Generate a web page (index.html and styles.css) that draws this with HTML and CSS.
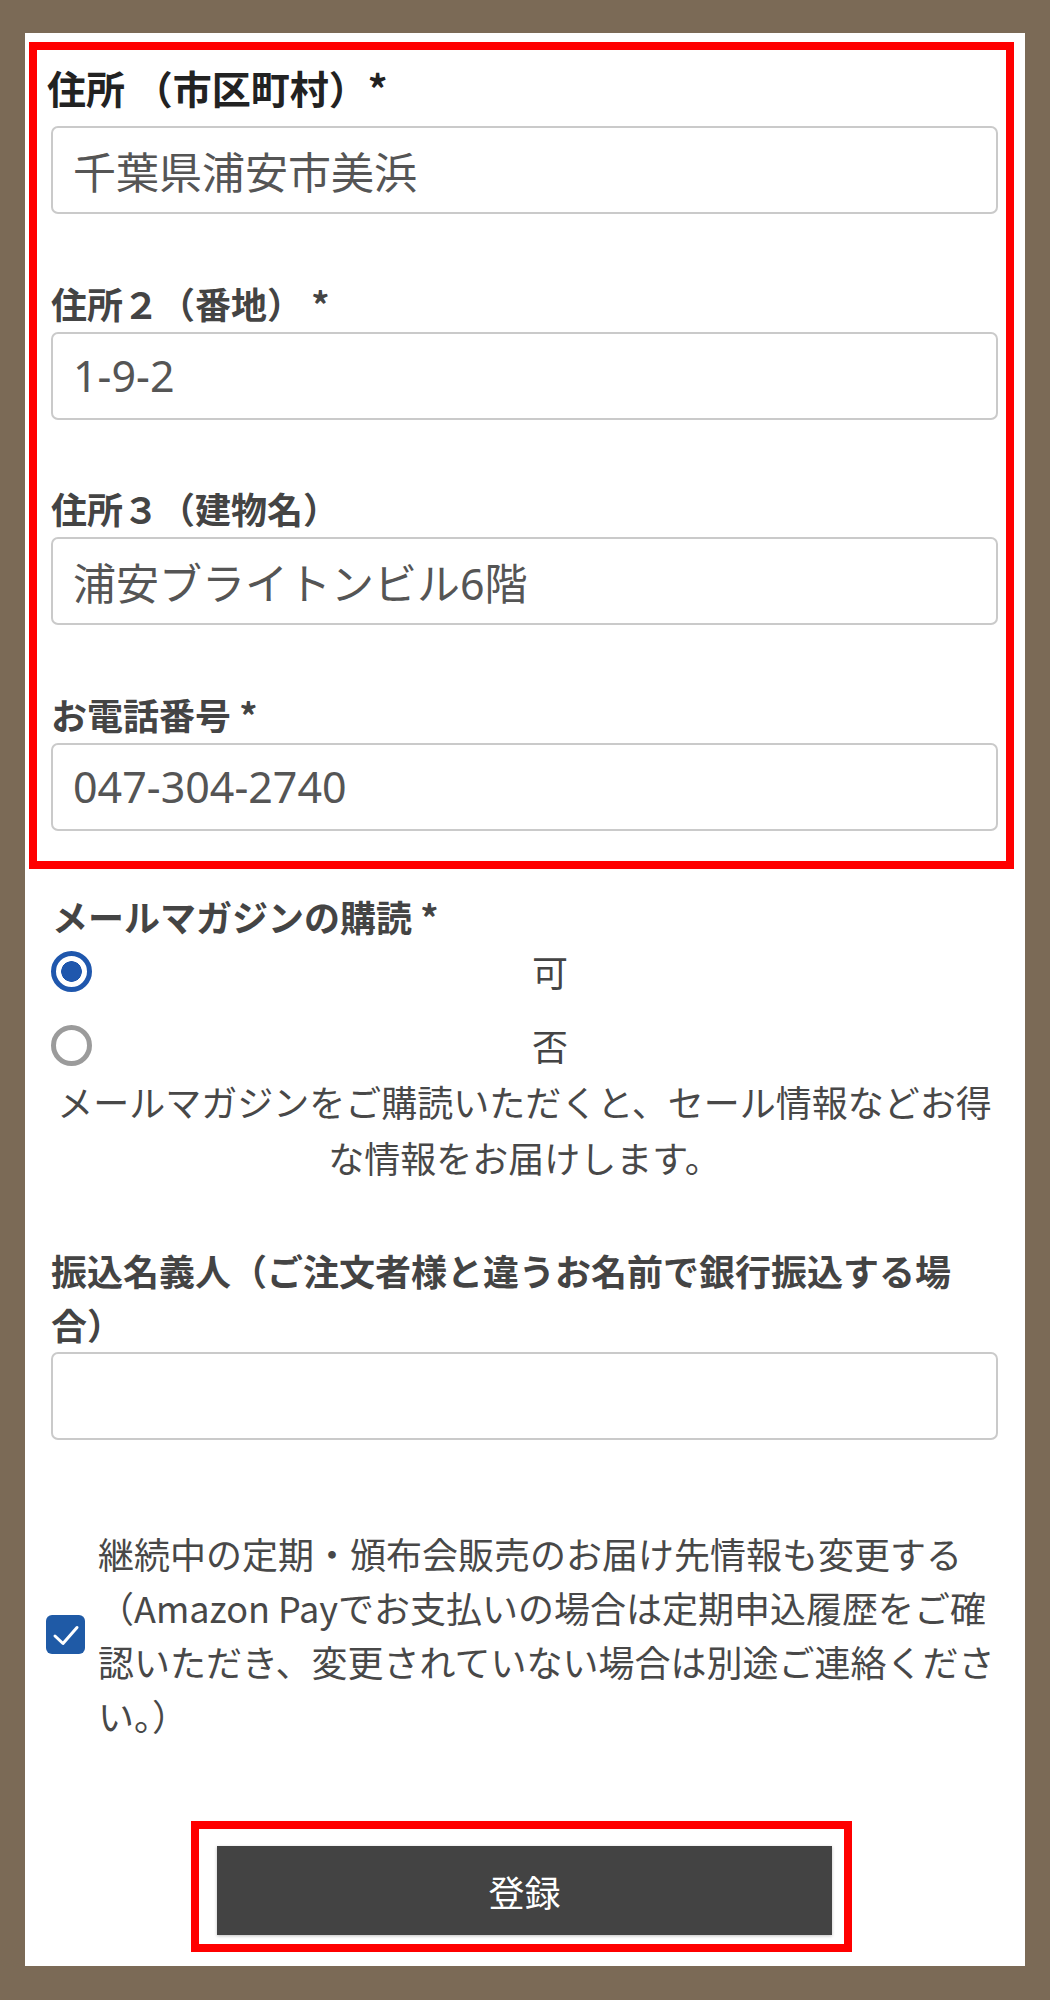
FILE: index.html
```html
<!DOCTYPE html>
<html lang="ja">
<head>
<meta charset="utf-8">
<title>お届け先情報</title>
<link rel="stylesheet" href="styles.css">
</head>
<body>
<div class="panel">
  <div class="mark mark-fields">
    <div class="field">
      <label class="label label-first">住所 （市区町村）*</label>
      <input class="text-input" type="text" value="千葉県浦安市美浜">
    </div>
    <div class="field">
      <label class="label">住所２（番地） *</label>
      <input class="text-input" type="text" value="1-9-2">
    </div>
    <div class="field">
      <label class="label">住所３（建物名）</label>
      <input class="text-input" type="text" value="浦安ブライトンビル6階">
    </div>
    <div class="field field-last">
      <label class="label">お電話番号 *</label>
      <input class="text-input" type="text" value="047-304-2740">
    </div>
  </div>

  <div class="mail">
    <div class="label">メールマガジンの購読 *</div>
    <label class="radio-row">
      <input class="radio" type="radio" name="mag" checked>
      <span class="radio-text">可</span>
    </label>
    <label class="radio-row radio-row-second">
      <input class="radio" type="radio" name="mag">
      <span class="radio-text">否</span>
    </label>
    <p class="note">メールマガジンをご購読いただくと、セール情報などお得な情報をお届けします。</p>
  </div>

  <div class="field payer">
    <label class="label">振込名義人（ご注文者様と違うお名前で銀行振込する場合）</label>
    <input class="text-input" type="text" value="">
  </div>

  <label class="check-row">
    <span class="checkbox">
      <svg width="39" height="39" viewBox="0 0 39 39"><path d="M9 21 L17 28.5 L31 12.5" fill="none" stroke="#fff" stroke-width="3" stroke-linecap="round" stroke-linejoin="round"/></svg>
    </span>
    <span class="check-text">継続中の定期・頒布会販売のお届け先情報も変更する<br>（Amazon Payでお支払いの場合は定期申込履歴をご確<br>認いただき、変更されていない場合は別途ご連絡くださ<br>い。）</span>
  </label>

  <div class="mark mark-button">
    <button class="submit" type="button">登録</button>
  </div>
</div>
</body>
</html>
```

FILE: styles.css
```css
* {
  box-sizing: border-box;
}

body {
  margin: 0;
  background: #7b6a56;
  font-family: "Noto Sans CJK JP", "Noto Sans", sans-serif;
  color: #444;
}

.panel {
  margin: 33px 25px 0 25px;
  background: #fff;
  padding: 9px 27px 14px 26px;
}

.mark {
  border: 8px solid #ff0000;
}

.mark-fields {
  margin: 0 -16px 0 -22px;
  padding: 10px 8px 30.7px 14px;
}

.field {
  display: flex;
  flex-direction: column;
  margin-bottom: 61.5px;
}

.field-last {
  margin-bottom: 0;
}

.label {
  display: block;
  font-size: 36px;
  line-height: 54px;
  font-weight: 700;
  color: #444;
  margin-bottom: 2px;
}

.label-first {
  font-size: 39px;
  color: #222;
  margin-left: -4px;
  margin-bottom: 12px;
}

.text-input {
  display: block;
  width: 100%;
  height: 88px;
  border: 2px solid #cacaca;
  border-radius: 7px;
  padding: 0 20px;
  font-family: "Noto Sans", "Noto Sans CJK JP", sans-serif;
  font-size: 43px;
  color: #555;
  background: #fff;
  outline: none;
}

.mail {
  margin-top: 20px;
}

.mail .label {
  margin-bottom: 0;
  margin-left: 1px;
}

.radio-row {
  display: flex;
  align-items: center;
  gap: 10px;
  height: 56px;
}

.radio-row-second {
  margin-top: 18px;
}

.radio {
  appearance: none;
  -webkit-appearance: none;
  margin: 0;
  width: 41px;
  height: 41px;
  flex: 0 0 41px;
  border-radius: 50%;
  border: 5px solid #9b9b9b;
  background: #fff;
}

.radio:checked {
  border-color: #1f57ad;
  background: radial-gradient(circle, #1f57ad 0 10px, #fff 10.6px);
}

.radio-text {
  flex: 1;
  text-align: center;
  font-size: 36px;
  line-height: 56px;
  color: #444;
}

.note {
  margin: 0;
  font-size: 36px;
  line-height: 56px;
  text-align: center;
  color: #484848;
}

.payer {
  margin-top: 58px;
  margin-bottom: 0;
}

.payer .label {
  margin-bottom: 1px;
}

.check-row {
  display: flex;
  align-items: center;
  gap: 13px;
  margin: 86px -4px 0 -5px;
}

.checkbox {
  flex: 0 0 39px;
  width: 39px;
  height: 39px;
  border-radius: 6px;
  background: #1f5aa6;
  display: flex;
}

.check-text {
  flex: 1;
  font-size: 36px;
  line-height: 54px;
  color: #484848;
}

.mark-button {
  width: 661px;
  margin: 79px 0 0 140px;
  padding: 17px 12px 9px 18px;
}

.submit {
  display: block;
  width: 100%;
  height: 89px;
  border: none;
  background: #434343;
  color: #fff;
  font-family: "Noto Sans CJK JP", sans-serif;
  font-size: 36px;
  box-shadow: 0 1px 3px rgba(0, 0, 0, 0.25);
}
```
